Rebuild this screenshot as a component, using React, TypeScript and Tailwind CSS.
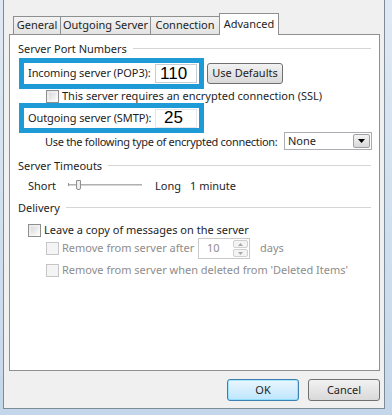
import React from "react";

const font = { fontFamily: '"Noto Sans", "Open Sans", sans-serif' };

function Check({ disabled = false }: { disabled?: boolean }) {
  return (
    <div
      className={
        "w-[13px] h-[13px] shrink-0 border " +
        (disabled ? "border-[#c6c6c6] bg-[#f4f4f4]" : "border-[#8e8f8f] bg-gradient-to-br from-[#e6e6e6] to-[#fdfdfd]")
      }
    >
      <div className={"m-[2px] w-[7px] h-[7px] " + (disabled ? "bg-[#f4f4f4]" : "bg-gradient-to-br from-[#dcdcdc] to-[#f6f6f6]")} />
    </div>
  );
}

function Group({ label }: { label: string }) {
  return (
    <div className="flex items-center h-[12px] ml-[8px] mr-[8px]">
      <span className="text-[11px] leading-[12px] text-[#1e1e1e] whitespace-nowrap">{label}</span>
      <div className="flex-1 ml-[6px] h-[2px] border-t border-[#d5d5d5] border-b-white" />
    </div>
  );
}

export default function App() {
  return (
    <div
      style={font}
      className="w-[392px] h-[415px] bg-gradient-to-b from-[#dfe9f3] to-[#c4d7ea] pl-[3px] pb-[6px] flex overflow-hidden"
    >
      <div className="w-[382px] shrink-0 bg-[#f0f0f0] border-l border-r border-b border-[#7d8b99] flex flex-col pl-[5px] pr-[4px] pt-[13px]">
        {/* tabs */}
        <div className="flex items-end h-[21px] pl-[4px] relative z-10">
          {[
            ["General", "w-[48px]"],
            ["Outgoing Server", "w-[91px]"],
            ["Connection", "w-[70px]"],
          ].map(([t, w], i) => (
            <div
              key={t}
              className={
                w +
                " h-[18px] border border-b-0 border-[#8e8f8f] bg-gradient-to-b from-[#f3f3f3] to-[#e3e3e3] text-[11px] text-[#1e1e1e] flex items-center justify-center whitespace-nowrap " +
                (i > 0 ? "-ml-px" : "")
              }
            >
              {t}
            </div>
          ))}
          <div className="w-[60px] h-[22px] -ml-px -mb-px border border-b-0 border-[#8e8f8f] bg-white text-[11px] text-[#1e1e1e] flex items-start pt-[2px] justify-center">
            Advanced
          </div>
        </div>
        {/* panel */}
        <div className="w-[371px] h-[337px] border border-[#8e8f8f] bg-white flex flex-col text-[11px] text-[#1e1e1e]">
          <div className="mt-[8px]">
            <Group label="Server Port Numbers" />
          </div>
          {/* box 1 */}
          <div className="mt-[3px] ml-[9px] flex items-center">
            <div className="w-[185px] h-[31px] border-[5px] border-[#1e9bd7] flex items-center pl-[4px]">
              <span className="whitespace-nowrap tracking-[-0.1px]">Incoming server (POP3):</span>
              <div className="ml-auto mr-[2px] w-[42px] h-[19px] shrink-0 border border-[#c5cdd6] bg-white flex items-center pl-[4px] text-[17px] text-black" style={{ fontFamily: '"Liberation Sans", Arial, sans-serif' }}>
                110
              </div>
            </div>
            <button className="ml-[3px] w-[76px] h-[21px] rounded-[3px] border border-[#707070] bg-gradient-to-b from-[#f2f2f2] to-[#d9d9d9] text-[11px] text-[#1e1e1e] flex items-center justify-center">
              Use Defaults
            </button>
          </div>
          <div className="mt-[1px] ml-[36px] h-[13px] flex items-center gap-[3px]">
            <Check />
            <span className="whitespace-nowrap">This server requires an encrypted connection (SSL)</span>
          </div>
          {/* box 2 */}
          <div className="ml-[9px] flex">
            <div className="w-[185px] h-[30px] border-[5px] border-[#1e9bd7] flex items-center pl-[4px]">
              <span className="whitespace-nowrap tracking-[-0.1px]">Outgoing server (SMTP):</span>
              <div className="ml-auto mr-[2px] w-[42px] h-[19px] shrink-0 border border-[#e4e8ec] bg-white flex items-center pl-[8px] text-[17px] text-black" style={{ fontFamily: '"Liberation Sans", Arial, sans-serif' }}>
                25
              </div>
            </div>
          </div>
          <div className="-mt-[1px] ml-[35px] h-[18px] flex items-center">
            <span className="w-[236px] shrink-0 whitespace-nowrap mt-[2px] tracking-[-0.3px]">Use the following type of encrypted connection:</span>
            <div className="ml-auto mr-[7px] w-[88px] shrink-0 h-[18px] border border-[#abadb3] bg-white flex items-center">
              <span className="pl-[3px] flex-1">None</span>
              <div className="w-[17px] h-[14px] mr-[1px] border border-[#a0a0a0] rounded-[2px] bg-gradient-to-b from-[#f4f4f4] to-[#d8d8d8] flex items-center justify-center">
                <svg width="7" height="4" viewBox="0 0 7 4"><path d="M0 0h7L3.5 4z" fill="#000" /></svg>
              </div>
            </div>
          </div>
          <div className="mt-[10px]">
            <Group label="Server Timeouts" />
          </div>
          <div className="mt-[7px] h-[14px] ml-[18px] flex items-center">
            <span className="w-[40px]">Short</span>
            <div className="relative w-[74px] h-[14px]">
              <div className="absolute left-0 right-0 top-[5px] h-[2px] bg-[#d6d6d6] border-t border-[#b0b0b0]" />
              <div className="absolute left-[0px] top-[4px] w-px h-[3px] bg-[#909090]" />
              <div className="absolute left-[8px] top-[1px] w-[5px] h-[10px] border border-[#909090] bg-[#eeeeee] rounded-b-[2px]" />
            </div>
            <span className="ml-[13px]">Long</span>
            <span className="ml-[9px]">1 minute</span>
          </div>
          <div className="mt-[9px]">
            <Group label="Delivery" />
          </div>
          <div className="mt-[10px] ml-[18px] h-[13px] flex items-center gap-[3px]">
            <Check />
            <span className="whitespace-nowrap">Leave a copy of messages on the server</span>
          </div>
          <div className="mt-[1px] ml-[36px] h-[21px] flex items-center text-[#8d8d8d]">
            <Check disabled />
            <span className="ml-[3px] w-[136px] whitespace-nowrap">Remove from server after</span>
            <div className="w-[52px] h-[21px] border border-[#c9c9c9] bg-white flex items-center">
              <span className="pl-[8px] flex-1">10</span>
              <div className="w-[15px] h-[17px] mr-[1px] flex flex-col gap-px">
                <div className="flex-1 border border-[#d0d0d0] rounded-[2px] bg-[#f4f4f4] flex items-center justify-center">
                  <svg width="5" height="3" viewBox="0 0 5 3"><path d="M0 3h5L2.5 0z" fill="#a8a8a8" /></svg>
                </div>
                <div className="flex-1 border border-[#d0d0d0] rounded-[2px] bg-[#f4f4f4] flex items-center justify-center">
                  <svg width="5" height="3" viewBox="0 0 5 3"><path d="M0 0h5L2.5 3z" fill="#a8a8a8" /></svg>
                </div>
              </div>
            </div>
            <span className="ml-[10px]">days</span>
          </div>
          <div className="mt-[5px] ml-[36px] h-[13px] flex items-center gap-[3px] text-[#8d8d8d]">
            <Check disabled />
            <span className="whitespace-nowrap">Remove from server when deleted from 'Deleted Items'</span>
          </div>
        </div>
        {/* buttons */}
        <div className="mt-[8px] flex justify-end gap-[9px] text-[11px] text-[#1e1e1e]">
          <button className="w-[72px] h-[22px] rounded-[3px] border border-[#3c7fb1] bg-gradient-to-b from-[#eaf6fd] to-[#bee6fd] shadow-[inset_0_0_0_1px_#48d2fc66] flex items-center justify-center">
            OK
          </button>
          <button className="w-[72px] h-[22px] rounded-[3px] border border-[#707070] bg-gradient-to-b from-[#f2f2f2] to-[#d9d9d9] flex items-center justify-center">
            Cancel
          </button>
        </div>
      </div>
    </div>
  );
}
